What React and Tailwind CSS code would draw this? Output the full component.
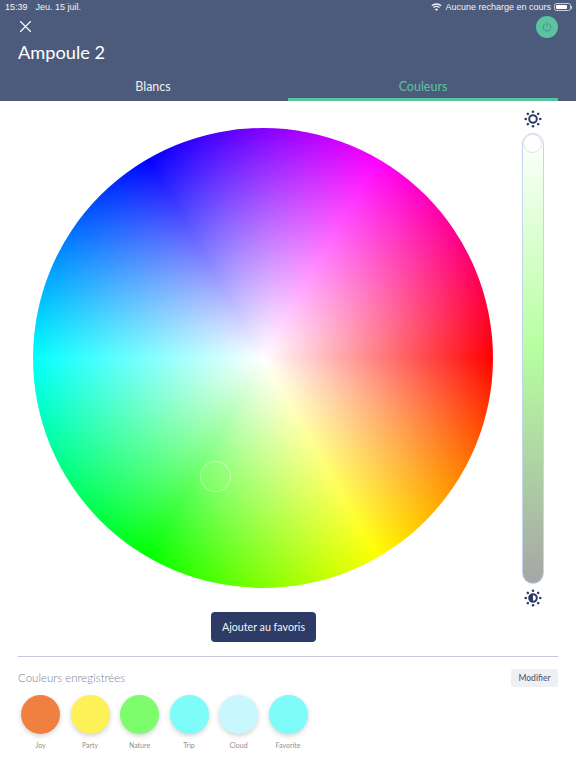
const sans = "font-['Liberation_Sans',Arial,sans-serif]";

function Sun({ half }) {
  const rays = [0, 45, 90, 135, 180, 225, 270, 315];
  return (
    <svg width="18" height="18" viewBox="0 0 18 18" fill="none">
      {rays.map((a) => (
        <circle key={a} cx="9" cy="1.7" r="1.3" fill="#2d3c66" transform={`rotate(${a} 9 9)`} />
      ))}
      <circle cx="9" cy="9" r="3.8" stroke="#2d3c66" strokeWidth="2" fill="#fff" />
      {half && <path d="M9 5.2a3.8 3.8 0 0 0 0 7.6z" fill="#2d3c66" />}
    </svg>
  );
}

const swatches = [
  ["Joy", "bg-[#ef8040]"],
  ["Party", "bg-[#fdf157]"],
  ["Nature", "bg-[#7dfd6b]"],
  ["Trip", "bg-[#7dfcf9]"],
  ["Cloud", "bg-[#c8f8fd]"],
  ["Favorite", "bg-[#7dfcf9]"],
];

export default function App() {
  return (
    <div className="w-[576px] h-[768px] overflow-hidden bg-white font-['Lato',sans-serif]">
      <header className="h-[101px] bg-[#4c5b7b] text-white flex flex-col">
        <div className={`h-[14px] pl-[5px] pr-[4px] flex items-center justify-between text-[9px] leading-none text-[#f2f4f7] ${sans}`}>
          <div className="flex gap-[8px]">
            <span>15:39</span>
            <span>Jeu. 15 juil.</span>
          </div>
          <div className="flex items-center gap-[3px]">
            <svg width="11" height="8" viewBox="0 0 11 8" fill="#f2f4f7">
              <path d="M5.5 8 3.9 6.2a2.4 2.4 0 0 1 3.2 0z" />
              <path d="M2.9 5.1a3.9 3.9 0 0 1 5.2 0l.8-.9a5.2 5.2 0 0 0-6.8 0z" />
              <path d="M1.3 3.3a6.2 6.2 0 0 1 8.4 0l.9-1a7.6 7.6 0 0 0-10.2 0z" />
            </svg>
            <span>Aucune recharge en cours</span>
            <div className="flex items-center">
              <div className="w-[17px] h-[8px] rounded-[2.5px] border border-[#c9ced9] p-[1px]">
                <div className="w-[11px] h-full rounded-[1px] bg-white" />
              </div>
              <div className="w-[1px] h-[3px] bg-[#c9ced9]" />
            </div>
          </div>
        </div>
        <div className="h-[59px] pl-[18px] pr-[18px] flex justify-between items-start">
          <div className="flex flex-col">
            <svg className="mt-[7px] ml-[2px]" width="11" height="11" viewBox="0 0 11 11" stroke="#fff" strokeWidth="1.1" fill="none" strokeLinecap="round">
              <path d="M.5.5l10 10M10.5.5l-10 10" />
            </svg>
            <h1 className="mt-[8px] text-[18.2px] leading-[24px] font-normal">Ampoule 2</h1>
          </div>
          <div className="mt-[2px] w-[22px] h-[22px] rounded-full bg-[#5cc3a0] flex items-center justify-center">
            <svg width="10" height="10" viewBox="0 0 10 10" fill="none" stroke="#3f8f80" strokeWidth="0.9" strokeLinecap="round">
              <path d="M5 .8v4" />
              <path d="M7.4 2a3.9 3.9 0 1 1-4.8 0" />
            </svg>
          </div>
        </div>
        <div className="flex-1 flex text-[12.5px]">
          <div className="w-[288px] pl-[18px] pt-[5px] text-center text-[#eef0f4]">Blancs</div>
          <div className="w-[270px] pt-[5px] text-center text-[#5cc3a0] border-b-[3px] border-[#5cc3a0]">Couleurs</div>
        </div>
      </header>

      <main className="relative flex pl-[33px] pt-[27px]">
        <div className="relative w-[460px] h-[460px] rounded-full bg-[image:radial-gradient(closest-side,#fff,#fff0),conic-gradient(from_90deg,#f00,#ff0,#0f0,#0ff,#00f,#f0f,#f00)]">
          <div className="absolute left-[167px] top-[333px] w-[31px] h-[31px] rounded-full border border-[#ffffff60] bg-[#a3ff7a30]" />
        </div>
        <div className="ml-[29px] -mt-[18px] w-[22px] flex flex-col items-center">
          <Sun />
          <div className="relative mt-[5px] w-[22px] h-[451px] rounded-full border-[1.5px] border-[#c3d6ef] bg-[linear-gradient(to_bottom,#fff_0%,#b6ffa0_48%,#a6a6a6_100%)]">
            <div className="absolute left-[0px] top-[0px] w-[19px] h-[19px] rounded-full bg-white border border-[#e4e4e4]" />
          </div>
          <div className="mt-[5px]">
            <Sun half />
          </div>
        </div>
      </main>

      <div className="mt-[5px] flex justify-center pr-[49px]">
        <button className="h-[30px] w-[105px] rounded-[4px] bg-[#2d3c66] text-[#f4f5f8] text-[10.7px]">Ajouter au favoris</button>
      </div>

      <section className="mx-[18px] mt-[14px] border-t border-[#c4c9de]">
        <div className="mt-[12px] flex items-center justify-between">
          <span className="text-[11.5px] text-[#7d8194] font-light">Couleurs enregistrées</span>
          <button className="h-[18px] w-[47px] rounded-[3px] bg-[#f0f0f2] text-[#4c5b7b] text-[8.5px] font-medium">Modifier</button>
        </div>
        <div className="mt-[8px] ml-[3px] flex gap-[10.5px]">
          {swatches.map(([name, color]) => (
            <div key={name} className="w-[39px] flex flex-col items-center">
              <div className={`w-[39px] h-[39px] rounded-full shadow-[0_2px_5px_rgba(0,0,0,0.18)] ${color}`} />
              <span className="mt-[7px] text-[7px] leading-[9px] text-[#8f8f8f] whitespace-nowrap">{name}</span>
            </div>
          ))}
        </div>
      </section>
    </div>
  );
}
